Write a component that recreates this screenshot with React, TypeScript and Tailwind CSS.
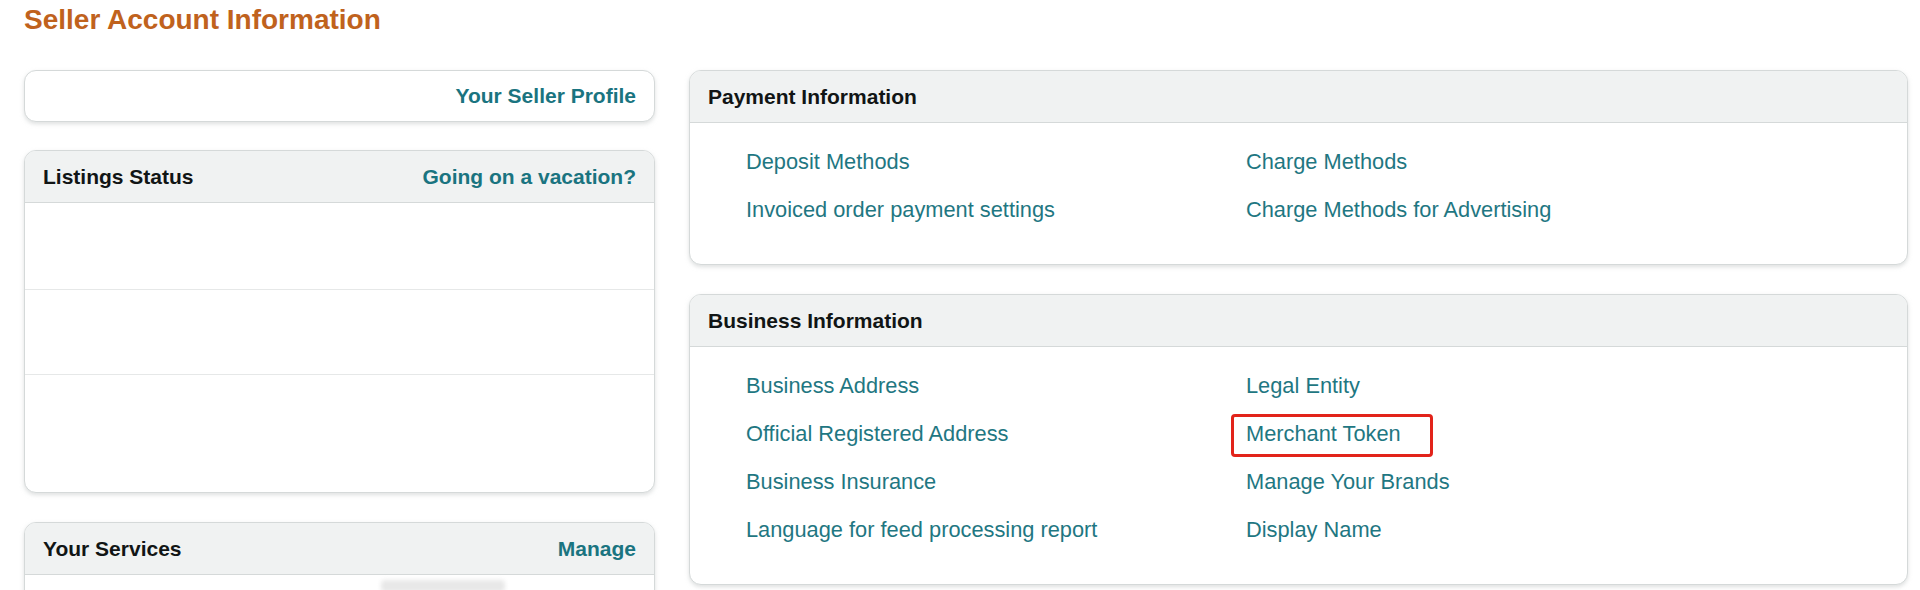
import React from 'react'

const font = { fontFamily: '"Liberation Sans", Arial, sans-serif' }

const linkCls = 'text-[21.8px] leading-[48px] text-[#1f7782] cursor-pointer hover:underline'

function CardHeader({ title, action }: { title: string; action?: string }) {
  return (
    <div className="flex h-[52px] items-center justify-between border-b border-[#d5d9d9] bg-[#f0f2f2] px-[18px]">
      <span className="text-[21px] font-bold text-[#111515]">{title}</span>
      {action && <span className="text-[21px] font-bold text-[#1a7480]">{action}</span>}
    </div>
  )
}

const cardCls =
  'overflow-hidden rounded-[12px] border border-[#d5d9d9] bg-white shadow-[0_2px_4px_rgba(200,204,204,0.6)]'

function LinkGrid({ left, right, marked }: { left: string[]; right: string[]; marked?: string }) {
  return (
    <div className="grid grid-cols-[500px_1fr] pt-[15px] pb-[30px] pl-[56px]">
      <div className="flex flex-col">
        {left.map((l) => (
          <span key={l} className={linkCls}>{l}</span>
        ))}
      </div>
      <div className="flex flex-col items-start">
        {right.map((l) => (
          <div key={l} className="relative">
            <span className={linkCls}>{l}</span>
            {l === marked && (
              <div className="pointer-events-none absolute top-[4px] left-[-15px] h-[43px] w-[202px] rounded-[4px] border-[3px] border-[#e2231a]" />
            )}
          </div>
        ))}
      </div>
    </div>
  )
}

export default function App() {
  return (
    <div className="h-[590px] w-[1920px] overflow-hidden bg-white pl-[24px]" style={font}>
      <h1 className="pt-[2px] text-[28px] leading-[36px] font-bold text-[#c0621d]">Seller Account Information</h1>

      <div className="mt-[32px] flex gap-[34px]">
        {/* Left column */}
        <div className="flex w-[631px] flex-col">
          <div className={`${cardCls} flex h-[52px] items-center justify-end pr-[18px]`}>
            <span className="text-[21px] font-bold text-[#1a7480]">Your Seller Profile</span>
          </div>

          <div className={`${cardCls} mt-[28px] h-[343px]`}>
            <CardHeader title="Listings Status" action="Going on a vacation?" />
            <div className="h-[87px] border-b border-[#e6e8e8]" />
            <div className="h-[85px] border-b border-[#e6e8e8]" />
            <div className="h-[118px]" />
          </div>

          <div className={`${cardCls} mt-[29px] h-[120px]`}>
            <CardHeader title="Your Services" action="Manage" />
            <div className="pt-[5px] pl-[356px]">
              <div className="h-[12px] w-[124px] rounded-sm bg-[#e8e8e8] blur-[2px]" />
            </div>
          </div>
        </div>

        {/* Right column */}
        <div className="flex w-[1219px] flex-col">
          <div className={cardCls}>
            <CardHeader title="Payment Information" />
            <LinkGrid
              left={['Deposit Methods', 'Invoiced order payment settings']}
              right={['Charge Methods', 'Charge Methods for Advertising']}
            />
          </div>

          <div className={`${cardCls} mt-[29px]`}>
            <CardHeader title="Business Information" />
            <LinkGrid
              left={['Business Address', 'Official Registered Address', 'Business Insurance', 'Language for feed processing report']}
              right={['Legal Entity', 'Merchant Token', 'Manage Your Brands', 'Display Name']}
              marked="Merchant Token"
            />
          </div>
        </div>
      </div>
    </div>
  )
}
